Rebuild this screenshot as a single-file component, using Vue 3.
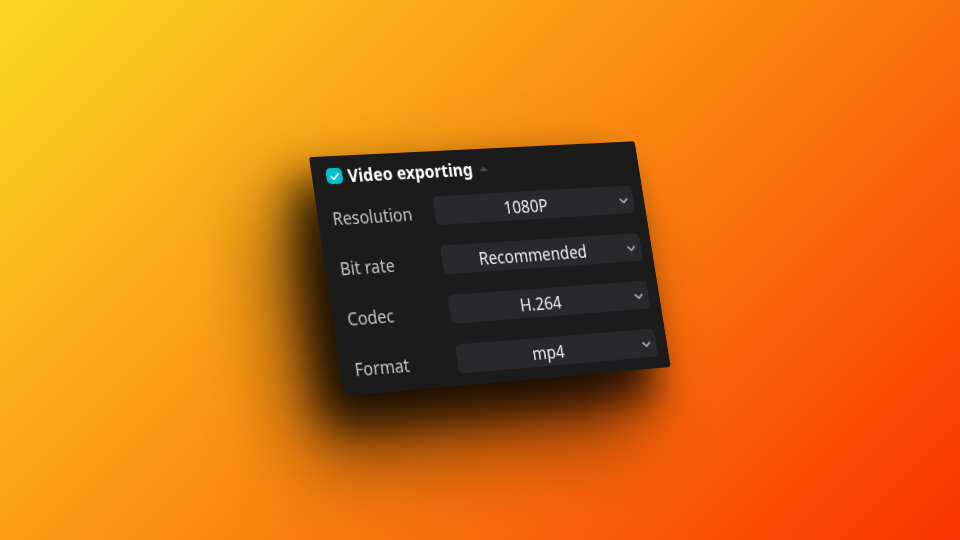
<template>
  <main class="stage">
    <section class="card">
      <header class="card-header">
        <label class="toggle">
          <span class="tick">
            <input v-model="enabled" type="checkbox" class="tick-input" />
            <svg v-if="enabled" class="tick-mark" viewBox="0 0 18 17" aria-hidden="true">
              <path d="M4.5 8.5 8 12 14 6" />
            </svg>
          </span>
          <span class="title">Video exporting</span>
        </label>
        <button
          type="button"
          class="collapse"
          aria-label="Toggle video settings"
          :aria-expanded="open"
          @click="open = !open"
        >
          <svg viewBox="0 0 10 5" aria-hidden="true">
            <path d="M5 0 10 5H0Z" />
          </svg>
        </button>
      </header>

      <div v-if="open" class="rows">
        <div v-for="field in fields" :key="field.id" class="row">
          <label :for="field.id" class="label">{{ field.label }}</label>
          <div class="select-wrap">
            <select :id="field.id" v-model="field.value" class="select" :disabled="!enabled">
              <option v-for="option in field.options" :key="option">{{ option }}</option>
            </select>
            <svg class="chevron" viewBox="0 0 12 8" aria-hidden="true">
              <path d="M1.5 1.5 6 5.5 10.5 1.5" />
            </svg>
          </div>
        </div>
      </div>
    </section>
  </main>
</template>

<script setup>
import { ref } from 'vue'

const enabled = ref(true)
const open = ref(true)

const fields = ref([
  { id: 'resolution', label: 'Resolution', value: '1080P', options: ['1080P'] },
  { id: 'bitrate', label: 'Bit rate', value: 'Recommended', options: ['Recommended'] },
  { id: 'codec', label: 'Codec', value: 'H.264', options: ['H.264'] },
  { id: 'format', label: 'Format', value: 'mp4', options: ['mp4'] }
])
</script>

<style>
body {
  margin: 0;
}
</style>

<style scoped>
.stage {
  box-sizing: border-box;
  min-height: 100vh;
  display: flex;
  align-items: center;
  justify-content: center;
  padding: 0 0 12px 28px;
  overflow: hidden;
  background: linear-gradient(135deg, #fbd824, #fa880f 50%, #fa3300);
  font-family: 'Noto Sans', sans-serif;
  font-size: 18px;
}

.card {
  box-sizing: border-box;
  width: 41%;
  min-width: 340px;
  padding: 6px 13px 12px 16px;
  border-radius: 3px;
  background: #1b1b1c;
  box-shadow:
    -24px 28px 44px rgba(0, 0, 0, 0.75),
    -48px 52px 90px rgba(0, 0, 0, 0.65);
  transform: perspective(3600px) rotateX(13deg) rotateY(30deg) rotateZ(-10deg);
}

.card-header {
  display: flex;
  align-items: center;
  gap: 8px;
  height: 28px;
  margin-bottom: 12px;
}

.toggle {
  display: flex;
  align-items: center;
  gap: 6px;
}

.tick {
  position: relative;
  display: flex;
}

.tick-input {
  appearance: none;
  width: 18px;
  height: 16px;
  margin: 0;
  border-radius: 5px;
  background: #3a3a3e;
}

.tick-input:checked {
  background: #05c1cd;
}

.tick-mark {
  position: absolute;
  inset: 0;
  width: 100%;
  height: 100%;
  fill: none;
  stroke: #fff;
  stroke-width: 1.8;
  pointer-events: none;
}

.title {
  color: #fff;
  font-weight: 700;
  line-height: 28px;
}

.collapse {
  display: flex;
  padding: 0;
  border: 0;
  background: none;
}

.collapse svg {
  width: 10px;
  height: 5px;
  fill: #48484a;
}

.rows {
  display: grid;
  gap: 21px;
}

.row {
  display: grid;
  grid-template-columns: 116px 1fr;
  align-items: center;
}

.label {
  padding-top: 3px;
  color: #c4c4c4;
  line-height: 26px;
}

.select-wrap {
  position: relative;
  display: flex;
}

.select {
  appearance: none;
  width: 100%;
  height: 29px;
  padding: 0 24px 0 0;
  border: 0;
  border-radius: 5px;
  background: #29292d;
  color: #eee;
  font: inherit;
  text-align: center;
  text-align-last: center;
  opacity: 1;
}

.chevron {
  position: absolute;
  top: 12px;
  right: 6px;
  width: 12px;
  height: 8px;
  fill: none;
  stroke: #a5a5a8;
  stroke-width: 2;
  pointer-events: none;
}
</style>
